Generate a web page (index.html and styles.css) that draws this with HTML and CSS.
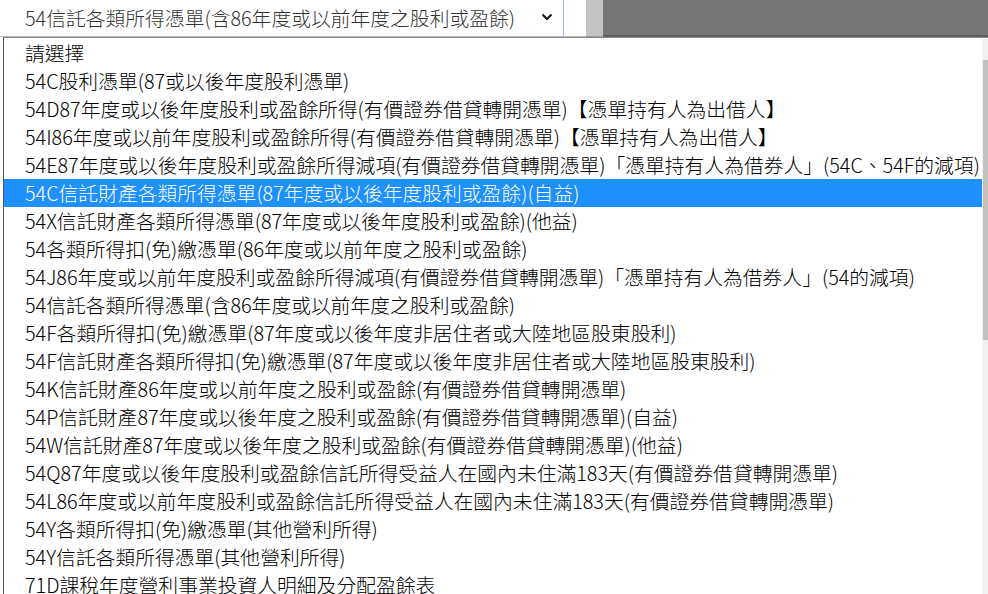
FILE: index.html
```html
<!doctype html>
<html lang="zh-Hant">
<head>
	<meta charset="utf-8">
	<title>憑單類別</title>
	<link rel="stylesheet" href="styles.css">
</head>
<body>
	<div class="topbar">
		<div class="picker">
			<span class="picker-text">54信託各類所得憑單(含86年度或以前年度之股利或盈餘)</span>
			<svg class="chevron" width="12" height="8" viewBox="0 0 12 8"><path d="M1.5 1.5 L6 6 L10.5 1.5" fill="none" stroke="#111" stroke-width="2"/></svg>
		</div>
		<div class="gap"></div>
		<div class="strip"></div>
		<div class="shade"></div>
	</div>
	<div class="dropdown">
		<ul class="options">
			<li>請選擇</li>
			<li>54C股利憑單(87或以後年度股利憑單)</li>
			<li>54D87年度或以後年度股利或盈餘所得(有價證券借貸轉開憑單)【憑單持有人為出借人】</li>
			<li>54I86年度或以前年度股利或盈餘所得(有價證券借貸轉開憑單)【憑單持有人為出借人】</li>
			<li>54E87年度或以後年度股利或盈餘所得減項(有價證券借貸轉開憑單)「憑單持有人為借券人」(54C、54F的減項)</li>
			<li class="selected">54C信託財產各類所得憑單(87年度或以後年度股利或盈餘)(自益)</li>
			<li>54X信託財產各類所得憑單(87年度或以後年度股利或盈餘)(他益)</li>
			<li>54各類所得扣(免)繳憑單(86年度或以前年度之股利或盈餘)</li>
			<li>54J86年度或以前年度股利或盈餘所得減項(有價證券借貸轉開憑單)「憑單持有人為借券人」(54的減項)</li>
			<li>54信託各類所得憑單(含86年度或以前年度之股利或盈餘)</li>
			<li>54F各類所得扣(免)繳憑單(87年度或以後年度非居住者或大陸地區股東股利)</li>
			<li>54F信託財產各類所得扣(免)繳憑單(87年度或以後年度非居住者或大陸地區股東股利)</li>
			<li>54K信託財產86年度或以前年度之股利或盈餘(有價證券借貸轉開憑單)</li>
			<li>54P信託財產87年度或以後年度之股利或盈餘(有價證券借貸轉開憑單)(自益)</li>
			<li>54W信託財產87年度或以後年度之股利或盈餘(有價證券借貸轉開憑單)(他益)</li>
			<li>54Q87年度或以後年度股利或盈餘信託所得受益人在國內未住滿183天(有價證券借貸轉開憑單)</li>
			<li>54L86年度或以前年度股利或盈餘信託所得受益人在國內未住滿183天(有價證券借貸轉開憑單)</li>
			<li>54Y各類所得扣(免)繳憑單(其他營利所得)</li>
			<li>54Y信託各類所得憑單(其他營利所得)</li>
			<li>71D課稅年度營利事業投資人明細及分配盈餘表</li>
		</ul>
		<div class="scrollbar"><div class="thumb"></div></div>
	</div>
</body>
</html>
```

FILE: styles.css
```css
html {
	font-family: "Noto Sans CJK TC", "Noto Sans", sans-serif;
	font-size: 19.8px;
	font-weight: 300;
}

body {
	margin: 0;
	background: #fff;
	height: 594px;
	overflow: hidden;
}

.topbar {
	display: flex;
	height: 37px;
}

.picker {
	width: 564px;
	flex-shrink: 0;
	display: flex;
	align-items: center;
	padding-left: 25px;
	padding-right: 8px;
	box-sizing: border-box;
	border-right: 1px solid #9cc0e6;
	border-bottom: 1px solid #b8b8b8;
	color: #333;
}

.picker-text {
	flex: 1;
	white-space: nowrap;
	line-height: 34px;
}

.chevron {
	margin-right: 2px;
	margin-top: -2px;
}

.gap {
	width: 22px;
	border-bottom: 1px solid #b8b8b8;
}

.strip {
	width: 17px;
	background: #c4c4c4;
	border-bottom: 1px solid #999;
}

.shade {
	flex: 1;
	background: #767676;
	border-bottom: 2px solid #5e5e5e;
}

.dropdown {
	display: flex;
	margin-left: 3px;
	padding-top: 1px;
	border-left: 1px solid #555;
	border-top: 1px solid #8a8a8a;
	height: 560px;
}

.options {
	flex: 1;
	list-style: none;
	margin: 0;
	padding: 0;
	overflow: hidden;
}

.options li {
	height: 28px;
	line-height: 28px;
	padding-left: 21px;
	white-space: nowrap;
	color: #000;
}

.options li.selected {
	background: #1e90ff;
	color: #fff;
}

.scrollbar {
	width: 6px;
	background: #f0f0f0;
	padding-top: 21px;
}

.thumb {
	margin-left: 1px;
	height: 280px;
	background: #c1c1c1;
}
```
